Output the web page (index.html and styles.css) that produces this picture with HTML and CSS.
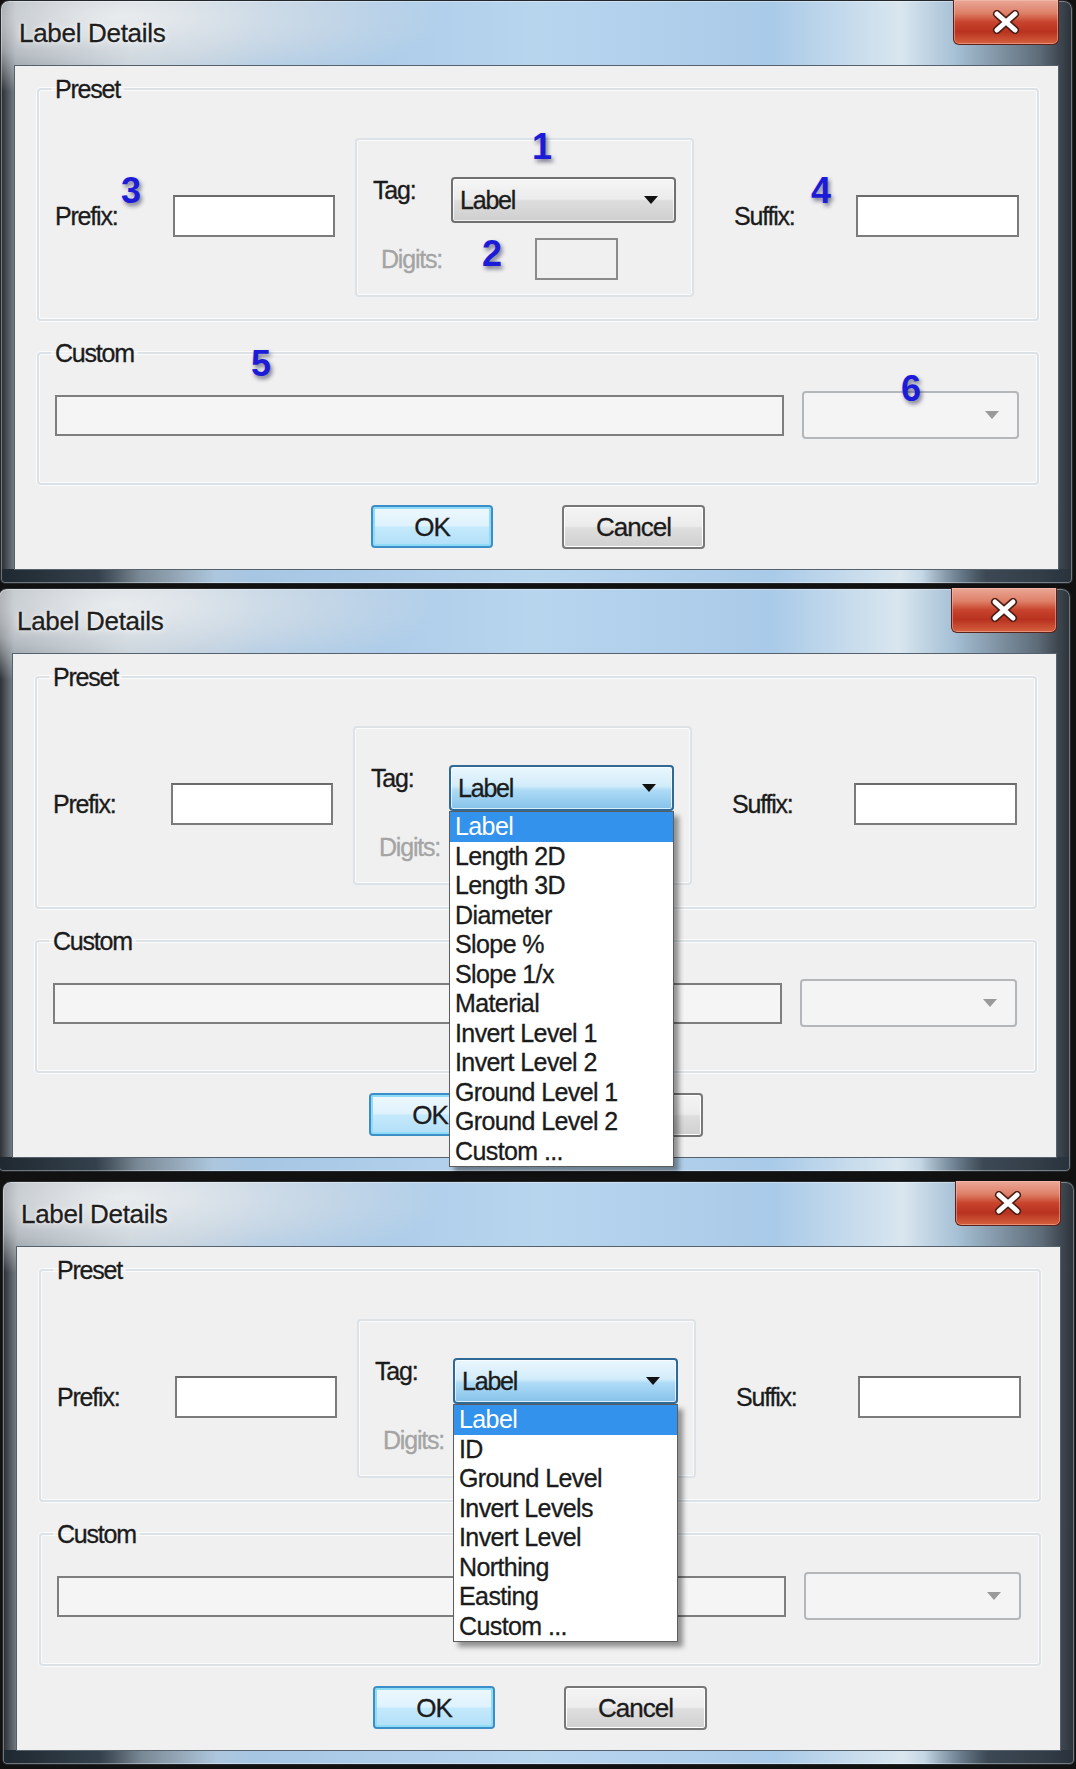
FILE: index.html
```html
<!doctype html>
<html>
	<head>
		<title>Label Details</title>
		<meta charset="utf8">
		<link rel="stylesheet" href="styles.css">
	</head>
	<body>
		<!-- 1: closed, with the numbered callouts -->
		<section class="window">
			<div class="titlebar">
				<span class="title">Label Details</span>
				<span class="close">
					<svg width="30" height="24" viewBox="0 0 30 24">
						<path d="M6 4 L24 20 M24 4 L6 20" stroke="#4a1c14" stroke-width="8" stroke-linecap="round"/>
						<path d="M6 4 L24 20 M24 4 L6 20" stroke="#fff" stroke-width="5" stroke-linecap="round"/>
					</svg>
				</span>
			</div>
			<div class="client">
				<fieldset class="group">
					<legend>Preset</legend>
					<div class="preset-row">
						<span class="field-label prefix">Prefix:</span>
						<div class="textbox"></div>
						<div class="tag-box">
							<span class="tag-label">Tag:</span>
							<div class="combo"><span>Label</span><i class="arrow"></i></div>
							<span class="digits-label">Digits:</span>
							<div class="digits"></div>
						</div>
						<span class="field-label suffix">Suffix:</span>
						<div class="textbox suffix-box"></div>
					</div>
				</fieldset>
				<fieldset class="group custom">
					<legend>Custom</legend>
					<div class="custom-row">
						<div class="textbox wide"></div>
						<div class="combo off"><i class="arrow"></i></div>
					</div>
				</fieldset>
				<div class="buttons">
					<span class="btn ok">OK</span>
					<span class="btn cancel">Cancel</span>
				</div>
			</div>
			<span class="marker m1">1</span>
			<span class="marker m2">2</span>
			<span class="marker m3">3</span>
			<span class="marker m4">4</span>
			<span class="marker m5">5</span>
			<span class="marker m6">6</span>
		</section>

		<!-- 2: tag list for pipes -->
		<section class="window second">
			<div class="titlebar">
				<span class="title">Label Details</span>
				<span class="close">
					<svg width="30" height="24" viewBox="0 0 30 24">
						<path d="M6 4 L24 20 M24 4 L6 20" stroke="#4a1c14" stroke-width="8" stroke-linecap="round"/>
						<path d="M6 4 L24 20 M24 4 L6 20" stroke="#fff" stroke-width="5" stroke-linecap="round"/>
					</svg>
				</span>
			</div>
			<div class="client">
				<fieldset class="group">
					<legend>Preset</legend>
					<div class="preset-row">
						<span class="field-label prefix">Prefix:</span>
						<div class="textbox"></div>
						<div class="tag-box">
							<span class="tag-label">Tag:</span>
							<div class="combo open"><span>Label</span><i class="arrow"></i>
								<ul class="droplist">
									<li class="sel">Label</li>
									<li>Length 2D</li>
									<li>Length 3D</li>
									<li>Diameter</li>
									<li>Slope %</li>
									<li>Slope 1/x</li>
									<li>Material</li>
									<li>Invert Level 1</li>
									<li>Invert Level 2</li>
									<li>Ground Level 1</li>
									<li>Ground Level 2</li>
									<li>Custom ...</li>
								</ul>
							</div>
							<span class="digits-label">Digits:</span>
							<div class="digits"></div>
						</div>
						<span class="field-label suffix">Suffix:</span>
						<div class="textbox suffix-box"></div>
					</div>
				</fieldset>
				<fieldset class="group custom">
					<legend>Custom</legend>
					<div class="custom-row">
						<div class="textbox wide"></div>
						<div class="combo off"><i class="arrow"></i></div>
					</div>
				</fieldset>
				<div class="buttons">
					<span class="btn ok">OK</span>
					<span class="btn cancel">Cancel</span>
				</div>
			</div>
		</section>

		<!-- 3: tag list for nodes -->
		<section class="window third">
			<div class="titlebar">
				<span class="title">Label Details</span>
				<span class="close">
					<svg width="30" height="24" viewBox="0 0 30 24">
						<path d="M6 4 L24 20 M24 4 L6 20" stroke="#4a1c14" stroke-width="8" stroke-linecap="round"/>
						<path d="M6 4 L24 20 M24 4 L6 20" stroke="#fff" stroke-width="5" stroke-linecap="round"/>
					</svg>
				</span>
			</div>
			<div class="client">
				<fieldset class="group">
					<legend>Preset</legend>
					<div class="preset-row">
						<span class="field-label prefix">Prefix:</span>
						<div class="textbox"></div>
						<div class="tag-box">
							<span class="tag-label">Tag:</span>
							<div class="combo open"><span>Label</span><i class="arrow"></i>
								<ul class="droplist">
									<li class="sel">Label</li>
									<li>ID</li>
									<li>Ground Level</li>
									<li>Invert Levels</li>
									<li>Invert Level</li>
									<li>Northing</li>
									<li>Easting</li>
									<li>Custom ...</li>
								</ul>
							</div>
							<span class="digits-label">Digits:</span>
							<div class="digits"></div>
						</div>
						<span class="field-label suffix">Suffix:</span>
						<div class="textbox suffix-box"></div>
					</div>
				</fieldset>
				<fieldset class="group custom">
					<legend>Custom</legend>
					<div class="custom-row">
						<div class="textbox wide"></div>
						<div class="combo off"><i class="arrow"></i></div>
					</div>
				</fieldset>
				<div class="buttons">
					<span class="btn ok">OK</span>
					<span class="btn cancel">Cancel</span>
				</div>
			</div>
		</section>
	</body>
</html>
```

FILE: styles.css
```css
html, body {
	margin: 0;
	padding: 0;
}
body {
	background: #111;
	font-family: "Liberation Sans", Arial, sans-serif;
	font-size: 25px;
	line-height: 26px;
	letter-spacing: -1.2px;
	color: #1b1b1b;
	-webkit-text-stroke: 0.3px currentColor;
	overflow: hidden;
}

/* window frame */
.window {
	position: relative;
	box-sizing: border-box;
	width: 1073px;
	height: 584px;
	padding: 0 13px 13px 13px;
	border: 1px solid #23282d;
	border-radius: 9px 9px 5px 5px;
	background:
		linear-gradient(to right, #1f2830 0, #34414c 9%, rgba(60,75,88,.5) 13%, rgba(0,0,0,0) 20%, rgba(0,0,0,0) 86%, rgba(40,50,60,.8) 92%) left bottom / 100% 14px no-repeat,
		radial-gradient(ellipse 320px 80px at 120px 16px, rgba(236,238,240,.95), rgba(222,227,231,.6) 55%, rgba(222,227,231,0) 100%),
		linear-gradient(to right, rgba(35,38,42,.95) 0, rgba(110,118,126,.7) 1.4%, rgba(0,0,0,0) 12%),
		linear-gradient(to right, #9aa5ae 0%, #b9c7d2 12%, #a6c6e4 24%, #b8d5ee 50%, #a9cae8 72%, #d9e6ef 84%, #a7c1d6 89%, #5d6b78 97%, #2b3138 100%);
	box-shadow: inset 0 0 0 1px rgba(255,255,255,.35);
}
.second {
	margin: 4px 0 0 -2px;
}
.third {
	margin: 9px 0 0 2px;
}
.titlebar {
	display: flex;
	align-items: center;
	height: 64px;
	padding-left: 5px;
}
.title {
	font-size: 26px;
	letter-spacing: -0.3px;
	color: #1e1e1e;
	text-shadow: 0 0 8px rgba(255,255,255,.9), 0 0 3px rgba(255,255,255,.8);
}
.close {
	display: flex;
	align-items: center;
	justify-content: center;
	align-self: flex-start;
	box-sizing: border-box;
	width: 106px;
	height: 45px;
	margin: -1px 0 0 auto;
	border: 1px solid #5a2219;
	border-top: 0;
	border-radius: 0 0 6px 6px;
	background: linear-gradient(#eaa897 0%, #de8068 30%, #c8442d 50%, #b8321f 72%, #d6613f 100%);
	box-shadow: inset 0 0 0 1px rgba(255,200,190,.45);
}

/* client area */
.client {
	box-sizing: border-box;
	height: 505px;
	padding: 10px 19px 0 22px;
	border: 1px solid #55616d;
	background: #f0f0f0;
}
.group {
	min-width: 0;
	margin: 0;
	padding: 36px 17px 22px 16px;
	border: 2px solid #dbe1e5;
	border-radius: 4px;
	box-shadow: inset 0 0 0 1px #fbfbfb, 0 0 0 1px #fbfbfb;
}
.group legend {
	margin-left: -4px;
	padding: 0 4px;
	line-height: 26px;
}
.custom {
	margin-top: 19px;
	padding: 25px 17px 44px 16px;
}

/* preset row */
.preset-row {
	display: flex;
	align-items: center;
}
.field-label {
	box-sizing: border-box;
	margin-bottom: 3px;
}
.prefix {
	width: 118px;
}
.suffix {
	width: 122px;
}
.textbox {
	box-sizing: border-box;
	width: 162px;
	height: 42px;
	margin-bottom: 3px;
	border: 2px solid #7b7b7b;
	border-top-color: #6a6a6a;
	background: #fff;
}
.suffix-box {
	width: 163px;
}
.tag-box {
	display: grid;
	grid-template-columns: 78px 225px;
	grid-template-rows: 46px 42px;
	row-gap: 15px;
	box-sizing: border-box;
	width: 339px;
	height: 159px;
	margin: 0 40px 0 20px;
	padding: 37px 16px 15px 16px;
	border: 2px solid #dde2e6;
	border-radius: 4px;
	box-shadow: inset 0 0 0 1px #fbfbfb;
}
.tag-label {
	align-self: start;
}
.digits-label {
	align-self: center;
	padding-left: 8px;
	color: #a4a4a4;
}
.digits {
	box-sizing: border-box;
	width: 83px;
	height: 42px;
	margin-left: 84px;
	border: 2px solid #8a8a8a;
	background: #f0f0f0;
}

/* combo boxes */
.combo {
	position: relative;
	display: flex;
	align-items: center;
	box-sizing: border-box;
	height: 46px;
	padding: 0 16px 0 7px;
	border: 2px solid #707070;
	border-radius: 4px;
	background: linear-gradient(#f6f6f6 0%, #ebebeb 48%, #dddddd 52%, #cfcfcf 100%);
	box-shadow: inset 0 0 0 1px rgba(255,255,255,.7);
}
.combo span {
	flex: 1;
}
.arrow {
	width: 0;
	height: 0;
	border-left: 7px solid transparent;
	border-right: 7px solid transparent;
	border-top: 8px solid #111;
}
.combo.open {
	border-color: #2f6a96;
	background: linear-gradient(#eaf6fd 0%, #d3edfb 45%, #aedbf6 55%, #86c2ea 100%);
}
.combo.off {
	justify-content: flex-end;
	width: 217px;
	height: 48px;
	padding-right: 18px;
	border-color: #b3b7ba;
	background: #f4f4f4;
	box-shadow: none;
}
.combo.off .arrow {
	border-top-color: #9a9a9a;
}

/* dropdown list */
.droplist {
	position: absolute;
	top: calc(100% + 2px);
	left: -2px;
	z-index: 2;
	box-sizing: border-box;
	width: 225px;
	margin: 0;
	padding: 0;
	list-style: none;
	border: 1px solid #5d5d5d;
	background: #fff;
	box-shadow: 5px 5px 5px rgba(0,0,0,.4);
	font-size: 25px;
	letter-spacing: -0.6px;
}
.droplist li {
	height: 29.5px;
	padding-left: 5px;
	line-height: 29.5px;
	white-space: nowrap;
}
.droplist .sel {
	background: #3392ec;
	color: #fff;
	-webkit-text-stroke: 0;
}

/* custom row */
.custom-row {
	display: flex;
	align-items: center;
	gap: 18px;
}
.textbox.wide {
	width: 729px;
	height: 41px;
	margin: 0;
	border-color: #7e7e7e;
	background: #f5f5f5;
}

/* buttons */
.buttons {
	display: flex;
	justify-content: center;
	align-items: flex-start;
	gap: 69px;
	margin-top: 20px;
}
.btn {
	display: flex;
	align-items: center;
	justify-content: center;
	box-sizing: border-box;
	border-radius: 4px;
	font-size: 26px;
	letter-spacing: -1px;
}
.ok {
	width: 122px;
	height: 43px;
	border: 2px solid #3c8fc6;
	background: linear-gradient(#eef8fe 0%, #def2fd 48%, #c4e9fc 52%, #b2dff8 100%);
	box-shadow: inset 0 0 0 2px #8fdcf8;
}
.cancel {
	width: 143px;
	height: 44px;
	border: 2px solid #777;
	background: linear-gradient(#f4f4f4 0%, #ececec 48%, #dedede 52%, #d0d0d0 100%);
	box-shadow: inset 0 0 0 1px #fff;
}

/* numbered callouts */
.marker {
	position: absolute;
	font-size: 36px;
	line-height: 36px;
	font-weight: bold;
	letter-spacing: 0;
	-webkit-text-stroke: 0;
	color: #1c1cd8;
	text-shadow: 2px 3px 4px rgba(20,20,60,.55);
}
.m1 { left: 531px; top: 128px; }
.m2 { left: 481px; top: 235px; }
.m3 { left: 120px; top: 172px; }
.m4 { left: 810px; top: 172px; }
.m5 { left: 250px; top: 345px; }
.m6 { left: 900px; top: 370px; }
```
